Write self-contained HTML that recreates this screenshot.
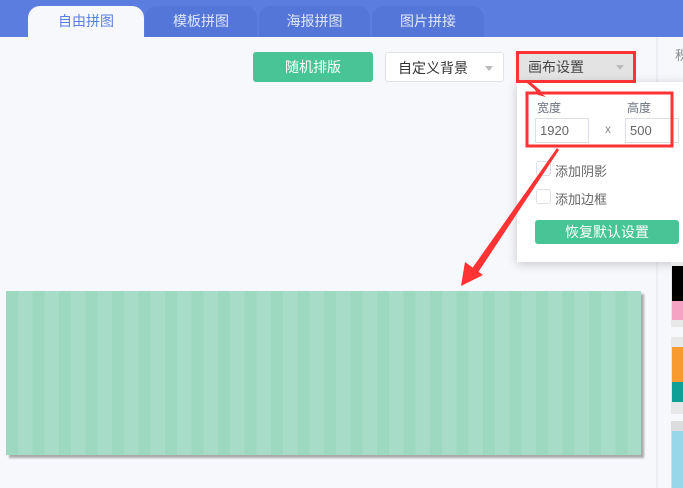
<!DOCTYPE html>
<html><head><meta charset="utf-8"><style>
*{margin:0;padding:0;box-sizing:border-box}
body{width:683px;height:488px;overflow:hidden;background:#f7f8fc;font-family:"Liberation Sans","Noto Sans CJK SC",sans-serif;position:relative}
.top{position:absolute;left:0;top:0;width:683px;height:37px;background:#5b7de0}
.tab{position:absolute;top:6px;height:31px;border-radius:12px 12px 0 0;background:#5476d8;color:#dfe6fb;font-size:14px;text-align:center;line-height:31px}
.tab.act{background:#f7f8fc;color:#5b7de0}
.btn{position:absolute;top:52px;height:30px;border-radius:3px;font-size:14px;line-height:30px}
.caret{position:absolute;right:10px;top:13px;border:4px solid transparent;border-top:5px solid #bbb}
.pop{position:absolute;left:517px;top:82px;width:170px;height:180px;background:#fff;box-shadow:0 2px 10px rgba(0,0,0,.2)}
.lbl{position:absolute;font-size:12px;color:#6a6f80}
.inp{position:absolute;top:118px;width:54px;height:25px;border:1px solid #dcdfe6;font-size:13px;color:#666;line-height:23px;padding-left:4px;background:#fff}
.cb{position:absolute;left:536px;width:15px;height:15px;border:1px solid #dcdfe6;border-radius:3px}
.cbl{position:absolute;left:555px;font-size:13px;color:#666}
</style></head><body>
<div class="top"></div>
<div class="tab act" style="left:28px;width:116px">自由拼图</div>
<div class="tab" style="left:145px;width:112px">模板拼图</div>
<div class="tab" style="left:259px;width:111px">海报拼图</div>
<div class="tab" style="left:372px;width:112px">图片拼接</div>
<div style="position:absolute;left:656px;top:37px;width:2px;height:451px;background:#eceef3"></div>
<div style="position:absolute;left:675px;top:45px;font-size:13px;color:#888">积</div>
<div class="btn" style="left:253px;width:120px;background:#48c596;color:#fff;text-align:center">随机排版</div>
<div class="btn" style="left:385px;width:119px;background:#fff;border:1px solid #e0e2e8;color:#333;padding-left:12px">自定义背景<span class="caret"></span></div>
<div class="btn" style="left:518px;width:116px;background:#e3e3e3;color:#444;padding-left:10px">画布设置<span class="caret"></span></div>
<div class="pop"></div>
<div class="lbl" style="left:537px;top:99px">宽度</div>
<div class="lbl" style="left:627px;top:99px">高度</div>
<div class="inp" style="left:535px">1920</div>
<div class="lbl" style="left:605px;top:122px;color:#888">x</div>
<div class="inp" style="left:625px">500</div>
<div class="cb" style="top:161px"></div><div class="cbl" style="top:161px">添加阴影</div>
<div class="cb" style="top:189px"></div><div class="cbl" style="top:189px">添加边框</div>
<div style="position:absolute;left:535px;top:220px;width:144px;height:24px;background:#48c596;border-radius:3px;color:#fff;font-size:14px;text-align:center;line-height:24px">恢复默认设置</div>
<div style="position:absolute;left:6px;top:291px;width:635px;height:164px;background:repeating-linear-gradient(90deg,#9dd8c1 0 12px,#a7dcc8 12px 26.5px);box-shadow:3px 3px 2px #aaa"></div>
<div style="position:absolute;left:671px;top:262px;width:12px;height:65px;background:#e8e8e8"></div>
<div style="position:absolute;left:672px;top:266px;width:11px;height:35px;background:#000"></div>
<div style="position:absolute;left:672px;top:301px;width:11px;height:19px;background:#f4a3c2"></div>
<div style="position:absolute;left:671px;top:337px;width:12px;height:77px;background:#e8e8e8"></div>
<div style="position:absolute;left:672px;top:347px;width:11px;height:35px;background:#f79a2f"></div>
<div style="position:absolute;left:672px;top:382px;width:11px;height:20px;background:#0e9f97"></div>
<div style="position:absolute;left:671px;top:421px;width:12px;height:67px;background:#ddd"></div>
<div style="position:absolute;left:672px;top:431px;width:11px;height:57px;background:#98d6ea"></div>
<svg width="683" height="488" style="position:absolute;left:0;top:0">
<rect x="517.5" y="52.5" width="117" height="29" fill="none" stroke="#f33" stroke-width="3"/>
<rect x="527" y="93" width="145" height="53" fill="none" stroke="#f33" stroke-width="3"/>
<path d="M527 81 L540 92" stroke="#f33" stroke-width="3"/>
<path d="M546 97 L534 88 L538 95 Z" fill="#f33"/>
<path d="M559 150 L557 148 L471 270 L477 274 Z" fill="#f33"/>
<path d="M461 286 L465 262 L483 275 Z" fill="#f33"/>
</svg>
</body></html>
